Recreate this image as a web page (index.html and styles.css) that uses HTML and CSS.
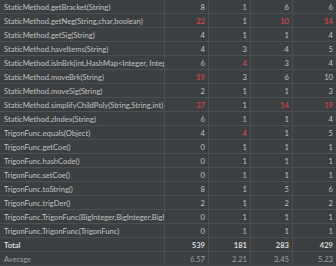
FILE: index.html
```html
<!DOCTYPE html>
<html>
<head>
<meta charset="utf-8">
<link rel="stylesheet" href="styles.css">
</head>
<body>
<div class="table">
  <div class="row"><div class="name">StaticMethod.getBracket(String)</div><div class="num">8</div><div class="num">1</div><div class="num">6</div><div class="num">6</div></div>
  <div class="row"><div class="name">StaticMethod.getNeg(String,char,boolean)</div><div class="num bad">22</div><div class="num">1</div><div class="num bad">10</div><div class="num bad">14</div></div>
  <div class="row"><div class="name">StaticMethod.getSig(String)</div><div class="num">4</div><div class="num">1</div><div class="num">1</div><div class="num">4</div></div>
  <div class="row"><div class="name">StaticMethod.haveItems(String)</div><div class="num">4</div><div class="num">3</div><div class="num">4</div><div class="num">5</div></div>
  <div class="row"><div class="name">StaticMethod.isInBrk(int,HashMap&lt;Integer, Integer&gt;)</div><div class="num">6</div><div class="num bad">4</div><div class="num">3</div><div class="num">4</div></div>
  <div class="row"><div class="name">StaticMethod.moveBrk(String)</div><div class="num bad">19</div><div class="num">3</div><div class="num">6</div><div class="num">10</div></div>
  <div class="row"><div class="name">StaticMethod.moveSig(String)</div><div class="num">2</div><div class="num">1</div><div class="num">1</div><div class="num">3</div></div>
  <div class="row"><div class="name">StaticMethod.simplifyChildPoly(String,String,int)</div><div class="num bad">37</div><div class="num">1</div><div class="num bad">14</div><div class="num bad">19</div></div>
  <div class="row"><div class="name">StaticMethod.zIndex(String)</div><div class="num">6</div><div class="num">1</div><div class="num">1</div><div class="num">4</div></div>
  <div class="row"><div class="name">TrigonFunc.equals(Object)</div><div class="num">4</div><div class="num bad">4</div><div class="num">1</div><div class="num">5</div></div>
  <div class="row"><div class="name">TrigonFunc.getCoe()</div><div class="num">0</div><div class="num">1</div><div class="num">1</div><div class="num">1</div></div>
  <div class="row"><div class="name">TrigonFunc.hashCode()</div><div class="num">0</div><div class="num">1</div><div class="num">1</div><div class="num">1</div></div>
  <div class="row"><div class="name">TrigonFunc.setCoe()</div><div class="num">0</div><div class="num">1</div><div class="num">1</div><div class="num">1</div></div>
  <div class="row"><div class="name">TrigonFunc.toString()</div><div class="num">8</div><div class="num">1</div><div class="num">5</div><div class="num">6</div></div>
  <div class="row"><div class="name">TrigonFunc.trigDer()</div><div class="num">2</div><div class="num">1</div><div class="num">2</div><div class="num">2</div></div>
  <div class="row"><div class="name">TrigonFunc.TrigonFunc(BigInteger,BigInteger,BigInteger)</div><div class="num">0</div><div class="num">1</div><div class="num">1</div><div class="num">1</div></div>
  <div class="row"><div class="name">TrigonFunc.TrigonFunc(TrigonFunc)</div><div class="num">0</div><div class="num">1</div><div class="num">1</div><div class="num">1</div></div>
  <div class="row total"><div class="name">Total</div><div class="num">539</div><div class="num">181</div><div class="num">283</div><div class="num">429</div></div>
  <div class="row average"><div class="name">Average</div><div class="num">6.57</div><div class="num">2.21</div><div class="num">3.45</div><div class="num">5.23</div></div>
</div>
</body>
</html>
```

FILE: styles.css
```css
html, body {
  margin: 0;
  padding: 0;
  background: #3c3f41;
  overflow: hidden;
}

.table {
  width: 336px;
  font-family: Lato, "Noto Sans", sans-serif;
  font-size: 7.6px;
  color: #c0c0c0;
}

.row {
  display: grid;
  grid-template-columns: 164px 44px 42px 42px 44px;
  height: 14px;
  box-sizing: border-box;
  border-bottom: 1px solid #4b4e50;
}

.name,
.num {
  line-height: 14px;
  white-space: nowrap;
  overflow: hidden;
  min-width: 0;
}

.name {
  padding-left: 4px;
}

.num {
  text-align: right;
  padding-right: 3px;
  border-left: 1px solid #4b4e50;
}

.bad {
  color: #e3494e;
}

.total {
  font-weight: bold;
  color: #d8d8d8;
}

.average {
  color: #a0a0a0;
}
```
